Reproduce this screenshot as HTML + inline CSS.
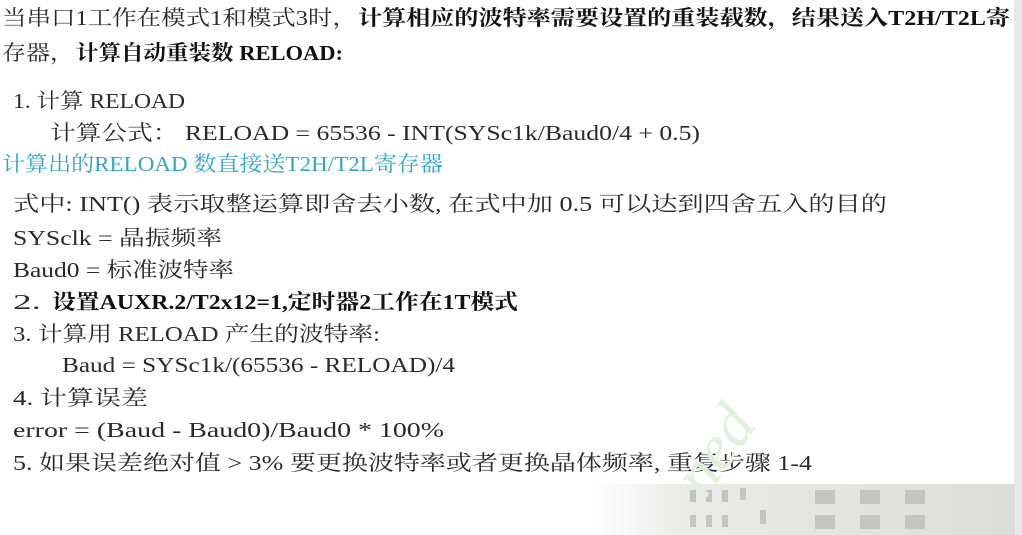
<!DOCTYPE html>
<html><head><meta charset="utf-8"><style>
html,body{margin:0;padding:0;background:#fff;width:1022px;height:535px;overflow:hidden}
svg{display:block}
text{font-family:"Liberation Serif","Noto Serif CJK SC",serif;font-size:21px;fill:#2a2a2a}
.b{font-weight:bold;fill:#111}
.c{fill:#2fa6cc}
</style></head><body>
<svg width="1022" height="535" viewBox="0 0 1022 535">
<defs>
<linearGradient id="g" x1="0" x2="1" y1="0" y2="0">
<stop offset="0" stop-color="#fff"/><stop offset="0.2" stop-color="#ebebe8"/><stop offset="1" stop-color="#dcdcd8"/>
</linearGradient>
</defs>
<rect x="1014" y="0" width="8" height="535" fill="#e8e8e8"/>
<rect x="595" y="484" width="420" height="51" fill="url(#g)"/>
<g fill="#c4c4c0">
<rect x="690" y="490" width="6" height="12"/><rect x="706" y="490" width="6" height="12"/><rect x="722" y="490" width="6" height="12"/><rect x="740" y="488" width="6" height="12"/>
<rect x="690" y="515" width="6" height="12"/><rect x="706" y="515" width="6" height="12"/><rect x="722" y="515" width="6" height="12"/><rect x="760" y="510" width="6" height="14"/>
<rect x="815" y="490" width="20" height="14"/><rect x="860" y="490" width="20" height="14"/><rect x="905" y="490" width="20" height="14"/>
<rect x="815" y="515" width="20" height="14"/><rect x="860" y="515" width="20" height="14"/><rect x="905" y="515" width="20" height="14"/>
</g>
<text x="2" y="25" textLength="355" lengthAdjust="spacingAndGlyphs">当串口1工作在模式1和模式3时，</text>
<text class="b" x="358" y="25" textLength="652" lengthAdjust="spacingAndGlyphs">计算相应的波特率需要设置的重装载数，结果送入T2H/T2L寄</text>
<text x="2" y="60" textLength="72" lengthAdjust="spacingAndGlyphs">存器，</text>
<text class="b" x="76" y="60" textLength="267" lengthAdjust="spacingAndGlyphs">计算自动重装数 RELOAD:</text>
<text x="13" y="108" textLength="172" lengthAdjust="spacingAndGlyphs">1. 计算 RELOAD</text>
<text x="50" y="140" textLength="650" lengthAdjust="spacingAndGlyphs">计算公式： RELOAD = 65536 - INT(SYSc1k/Baud0/4 + 0.5)</text>
<text class="c" x="2" y="171" textLength="441" lengthAdjust="spacingAndGlyphs">计算出的RELOAD 数直接送T2H/T2L寄存器</text>
<text x="13" y="211" textLength="874" lengthAdjust="spacingAndGlyphs">式中: INT() 表示取整运算即舍去小数, 在式中加 0.5 可以达到四舍五入的目的</text>
<text x="13" y="245" textLength="209" lengthAdjust="spacingAndGlyphs">SYSclk = 晶振频率</text>
<text x="13" y="277" textLength="221" lengthAdjust="spacingAndGlyphs">Baud0 = 标准波特率</text>
<text x="13" y="309" textLength="28" lengthAdjust="spacingAndGlyphs">2.</text>
<text class="b" x="52" y="309" textLength="466" lengthAdjust="spacingAndGlyphs">设置AUXR.2/T2x12=1,定时器2工作在1T模式</text>
<text x="13" y="341" textLength="367" lengthAdjust="spacingAndGlyphs">3. 计算用 RELOAD 产生的波特率:</text>
<text x="62" y="372" textLength="393" lengthAdjust="spacingAndGlyphs">Baud = SYSc1k/(65536 - RELOAD)/4</text>
<text x="13" y="405" textLength="135" lengthAdjust="spacingAndGlyphs">4. 计算误差</text>
<text x="13" y="437" textLength="431" lengthAdjust="spacingAndGlyphs">error = (Baud - Baud0)/Baud0 * 100%</text>
<text x="13" y="470" textLength="799" lengthAdjust="spacingAndGlyphs">5. 如果误差绝对值 &gt; 3% 要更换波特率或者更换晶体频率, 重复步骤 1-4</text>
<text x="705" y="500" style="font-size:64px;font-style:italic;fill:#e2f0dc" transform="rotate(-55 705 500)">ned</text>
</svg>
</body></html>
